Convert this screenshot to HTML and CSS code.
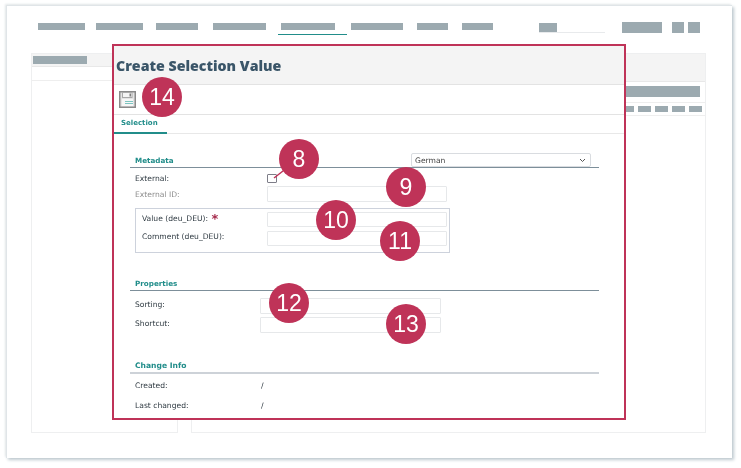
FILE: index.html
```html
<!DOCTYPE html>
<html lang="en">
<head>
<meta charset="utf-8">
<title>Create Selection Value</title>
<link rel="stylesheet" href="styles.css">
</head>
<body>
<div class="screen">
  <nav class="nav">
    <span class="tab t1"><i class="bar"></i></span>
    <span class="tab t2"><i class="bar"></i></span>
    <span class="tab t3"><i class="bar"></i></span>
    <span class="tab t4"><i class="bar"></i></span>
    <span class="tab t5 active"><i class="bar"></i></span>
    <span class="tab t6"><i class="bar"></i></span>
    <span class="tab t7"><i class="bar"></i></span>
    <span class="tab t8"><i class="bar"></i></span>
    <span class="search"><i class="search-btn"></i></span>
    <i class="nav-btn wide"></i>
    <i class="nav-btn sq first"></i>
    <i class="nav-btn sq"></i>
  </nav>
  <div class="panels">
    <section class="panel left">
      <div class="left-head"><i class="left-bar"></i></div>
      <div class="left-row"></div>
    </section>
    <section class="panel right">
      <div class="right-head"></div>
      <div class="right-bar-row"><i class="right-bar"></i></div>
      <div class="right-tools"><i class="tool"></i><i class="tool"></i><i class="tool"></i><i class="tool"></i><i class="tool"></i></div>
    </section>
  </div>

  <div class="dialog">
    <header class="dialog-head"><h1>Create Selection Value</h1></header>
    <div class="toolbar">
      <svg class="save" width="17" height="17" viewBox="0 0 17 17" aria-hidden="true">
        <rect x="0.75" y="0.75" width="15.5" height="15.5" fill="#e4e4e4" stroke="#8a8a8a" stroke-width="1.5"/>
        <rect x="3.5" y="1.5" width="9.5" height="5" fill="#f4f4f4" stroke="#a8a8a8" stroke-width="1"/>
        <rect x="10.5" y="2.5" width="1.5" height="3" fill="#7d7d7d"/>
        <rect x="3" y="8" width="11" height="7" fill="#f6f6f6"/>
        <path d="M6 10.5h8M6 12.5h8" stroke="#7cc4c0" stroke-width="1"/>
      </svg>
    </div>
    <div class="tabs"><span class="tab-sel">Selection</span></div>
    <div class="form">
      <div class="head"><h2>Metadata</h2>
        <div class="select"><span>German</span>
          <svg width="7" height="5" viewBox="0 0 7 5" aria-hidden="true"><path d="M1 1l2.5 2.5L6 1" fill="none" stroke="#555" stroke-width="1"/></svg>
        </div>
      </div>
      <div class="row check-row"><label class="lbl wide-lbl">External:</label><i class="check"></i></div>
      <div class="row id-row"><label class="lbl wide-lbl muted">External ID:</label><i class="input"></i></div>
      <div class="box">
        <div class="box-row"><label class="lbl lift-1">Value (deu_DEU): <b class="req">*</b></label><i class="input"></i></div>
        <div class="box-row"><label class="lbl lift-2">Comment (deu_DEU):</label><i class="input"></i></div>
      </div>
      <div class="head props"><h2>Properties</h2></div>
      <div class="row short sort"><label class="lbl">Sorting:</label><i class="input"></i></div>
      <div class="row short cut"><label class="lbl">Shortcut:</label><i class="input"></i></div>
      <div class="head info"><h2>Change Info</h2></div>
      <div class="row meta first-meta"><span class="lbl">Created:</span><span>/</span></div>
      <div class="row meta"><span class="lbl">Last changed:</span><span>/</span></div>
    </div>
  </div>

  <svg class="leader" width="40" height="30" viewBox="0 0 40 30" aria-hidden="true"><path d="M6 22L24 8" stroke="#bf3358" stroke-width="1.5"/></svg>
  <span class="pin p14">14</span>
  <span class="pin p8">8</span>
  <span class="pin p9">9</span>
  <span class="pin p10">10</span>
  <span class="pin p11">11</span>
  <span class="pin p12">12</span>
  <span class="pin p13">13</span>
</div>
</body>
</html>
```
FILE: styles.css
```css
* { box-sizing: border-box; }
html, body { margin: 0; padding: 0; background: #fff; }
body { width: 741px; height: 468px; overflow: hidden; font-family: "DejaVu Sans", sans-serif; font-size: 7.6px; color: #2f3a42; }
i { display: block; }

.screen {
  position: relative;
  width: 726px;
  height: 453px;
  margin: 5px 0 0 6px;
  padding: 16px 0 0 24px;
  background: #fff;
  border-top: 1px solid #e0e5e8;
  border-left: 1px solid #e0e5e8;
  box-shadow: 2px 2px 3px #bfcad0, -1px -1px 2px #e4e8ea;
  filter: blur(0.3px);
}

/* top navigation (redacted labels) */
.nav { display: flex; align-items: flex-start; height: 31px; margin-left: 7px; }
.tab { display: block; height: 13px; }
.bar { height: 7px; margin-top: 1px; background: #9caab0; }
.t1 { width: 47px; margin-right: 11px; }
.t2 { width: 47px; margin-right: 13px; }
.t3 { width: 42px; margin-right: 15px; }
.t4 { width: 53px; margin-right: 12px; }
.t5 { width: 69px; margin-right: 4px; padding: 0 12px 0 3px; }
.t6 { width: 52px; margin-right: 14px; }
.t7 { width: 31px; margin-right: 14px; }
.t8 { width: 31px; margin-right: 46px; }
.active { border-bottom: 1px solid #218d8a; }
.search { display: block; width: 66px; height: 10px; margin: 1px 17px 0 0; border-bottom: 1px solid #e8eaec; }
.search-btn { width: 18px; height: 9px; background: #9caab0; }
.nav-btn { height: 11px; background: #9caab0; }
.wide { width: 40px; margin-right: 10px; }
.sq { width: 12px; }
.first { margin-right: 4px; }

/* background panels */
.panels { display: flex; gap: 13px; height: 380px; }
.panel { border: 1px solid #eeeff0; }
.left { width: 147px; }
.left-head { height: 13px; padding: 2px 0 0 1px; background: #f4f4f4; border-bottom: 1px solid #e8e8e8; }
.left-bar { width: 54px; height: 8px; background: #9caab0; }
.left-row { height: 14px; border-bottom: 1px solid #eeeeee; }
.right { width: 515px; }
.right-head { height: 28px; background: #f4f4f4; border-bottom: 1px solid #e8e8e8; }
.right-bar-row { display: flex; justify-content: flex-end; height: 21px; padding: 4px 5px 0 0; border-bottom: 1px solid #eeeeee; }
.right-bar { width: 120px; height: 11px; background: #9caab0; }
.right-tools { display: flex; justify-content: flex-end; gap: 4px; height: 13px; padding: 3px 3px 0 0; border-bottom: 1px solid #eeeeee; }
.tool { width: 13px; height: 6px; background: #9caab0; }

/* dialog overlay */
.dialog {
  position: absolute;
  left: 105px;
  top: 38px;
  width: 514px;
  height: 376px;
  background: #fff;
  border: 2px solid #bf3358;
  overflow: hidden;
}
.dialog-head { display: flex; align-items: center; height: 39px; padding: 0 0 0 2px; background: #f4f4f4; border-bottom: 1px solid #e3e3e3; }
h1 { margin: 0; font: 800 14.2px "Open Sans", sans-serif; color: #3a5568; }
.toolbar { height: 30px; padding: 6px 0 0 5px; border-bottom: 1px solid #e3e3e3; }
.save { display: block; }
.tabs { height: 19px; border-bottom: 1px solid #e8e8e8; }
.tab-sel { display: block; width: 53px; height: 19px; padding: 4px 0 0 7px; border-bottom: 2px solid #218d8a; font-weight: 700; font-size: 7px; color: #218d8a; }

.form { padding: 19px 0 0 16px; }
.head { display: flex; justify-content: space-between; align-items: flex-end; width: 469px; height: 15px; padding-left: 5px; border-bottom: 1px solid #7d8f9a; }
h2 { margin: 0 0 2px; font-size: 7.2px; font-weight: 700; color: #218d8a; }
.select { display: flex; justify-content: space-between; align-items: center; width: 180px; height: 14px; margin: 0 8px 0 0; padding: 0 4px 0 3px; border: 1px solid #d9dce0; border-radius: 2px; color: #444; }
.row { display: flex; align-items: center; }
.lbl { display: block; flex: none; width: 130px; padding-left: 5px; }
.wide-lbl { width: 137px; }
.muted { color: #8d8d8d; }
.check-row { height: 9px; margin-top: 6px; }
.check { width: 10px; height: 9px; border: 1.5px solid #7d7d88; border-radius: 1px; background: #fff; }
.id-row { height: 16px; margin-top: 3px; }
.input { width: 180px; height: 100%; border: 1px solid #e6e8ea; border-radius: 1px; background: #fff; }
.box { display: flex; flex-direction: column; gap: 4px; width: 315px; height: 45px; margin: 6px 0 0 5px; padding: 3px 0 0 6px; border: 1px solid #cdd2dc; }
.box-row { display: flex; align-items: center; height: 15px; }
.box-row .lbl { width: 125px; padding: 0; }
.box-row .lift-1 { padding-bottom: 2px; }
.box-row .lift-2 { padding-bottom: 4px; }
.req { margin-left: 1px; color: #a62c4d; font-size: 13px; line-height: 8px; vertical-align: -2px; }
.props { margin-top: 23px; }
.short { height: 16px; }
.short .lbl { padding-bottom: 3px; }
.sort { margin-top: 7px; }
.short .input { width: 181px; }
.cut { margin-top: 3px; }
.info { height: 16px; margin-top: 25px; border-bottom: 2px solid #cdd2d8; }
.info h2 { font-size: 7.6px; }
.meta { height: 20px; }
.meta .lbl { width: 131px; }
.first-meta { margin-top: 1px; }

/* numbered callouts */
.pin {
  position: absolute;
  display: flex;
  align-items: center;
  justify-content: center;
  width: 40px;
  height: 40px;
  border-radius: 50%;
  background: #bf3358;
  color: #fff;
  font: 23px "Liberation Sans", sans-serif;
}
.p14 { left: 135px; top: 71px; }
.p8 { left: 272px; top: 133px; }
.p9 { left: 379px; top: 161px; }
.p10 { left: 309px; top: 194px; }
.p11 { left: 373px; top: 215px; }
.p12 { left: 262px; top: 277px; }
.p13 { left: 379px; top: 298px; }
.leader { position: absolute; left: 261px; top: 150px; }
```
